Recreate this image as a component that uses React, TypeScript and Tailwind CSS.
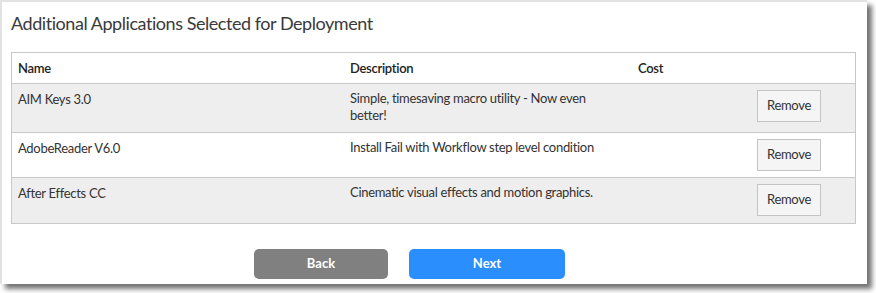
import React from 'react';

type App_ = { name: string; desc: React.ReactNode; alt: boolean; tall?: boolean };

const apps: App_[] = [
  { name: 'AIM Keys 3.0', desc: <>Simple, timesaving macro utility - Now even<br />better!</>, alt: true, tall: true },
  { name: 'AdobeReader V6.0', desc: 'Install Fail with Workflow step level condition', alt: false },
  { name: 'After Effects CC', desc: 'Cinematic visual effects and motion graphics.', alt: true },
];

export default function App() {
  return (
    <div className="w-[876px] h-[293px] bg-white overflow-hidden" style={{ fontFamily: '"Source Sans Pro", Lato, "Liberation Sans", sans-serif' }}>
      <div className="w-[867px] h-[284px] bg-white border-l-2 border-t-2 border-[#e2e2e2] shadow-[5px_5px_5px_rgba(0,0,0,0.55)] flex flex-col text-[#333]">
        <h1 className="pl-[9px] pt-[9px] text-[18px] tracking-[-0.45px] leading-6 text-[#3a3a3a]">Additional Applications Selected for Deployment</h1>

        <div className="ml-[9px] mt-[17px] w-[845px] border border-[#c8c8c8] text-[13px] tracking-[-0.3px]">
          <div className="grid grid-cols-[331px_288px_1fr] h-[31px] items-start pt-[6px] font-semibold text-[#222] border-b border-[#c8c8c8]">
            <div className="pl-[6px]">Name</div>
            <div className="pl-[7px]">Description</div>
            <div className="pl-[7px]">Cost</div>
          </div>
          {apps.map((a, i) => (
            <div
              key={a.name}
              className={`grid grid-cols-[331px_288px_1fr] ${a.tall ? 'h-[49px]' : 'h-[45px]'} ${a.alt ? 'bg-[#eeeeee]' : 'bg-white'} ${i < apps.length - 1 ? 'border-b border-[#c8c8c8]' : ''}`}
            >
              <div className="pl-[6px] pt-[6px] leading-[18px]">{a.name}</div>
              <div className="pl-[7px] pt-[6px] leading-[17px]">{a.desc}</div>
              <div className="flex justify-end pr-[34px] pt-[6px]">
                <button className="w-[64px] h-[32px] bg-[#f5f5f5] border border-[#c4c4c4] text-[13px] tracking-[-0.3px] text-[#333]">Remove</button>
              </div>
            </div>
          ))}
        </div>

        <div className="flex gap-[21px] pl-[252px] mt-[25px]">
          <button className="w-[134px] h-[30px] rounded-[5px] bg-[#808080] text-white font-bold text-[13px]">Back</button>
          <button className="w-[156px] h-[30px] rounded-[5px] bg-[#2a8efd] text-white font-bold text-[13px]">Next</button>
        </div>
      </div>
    </div>
  );
}
